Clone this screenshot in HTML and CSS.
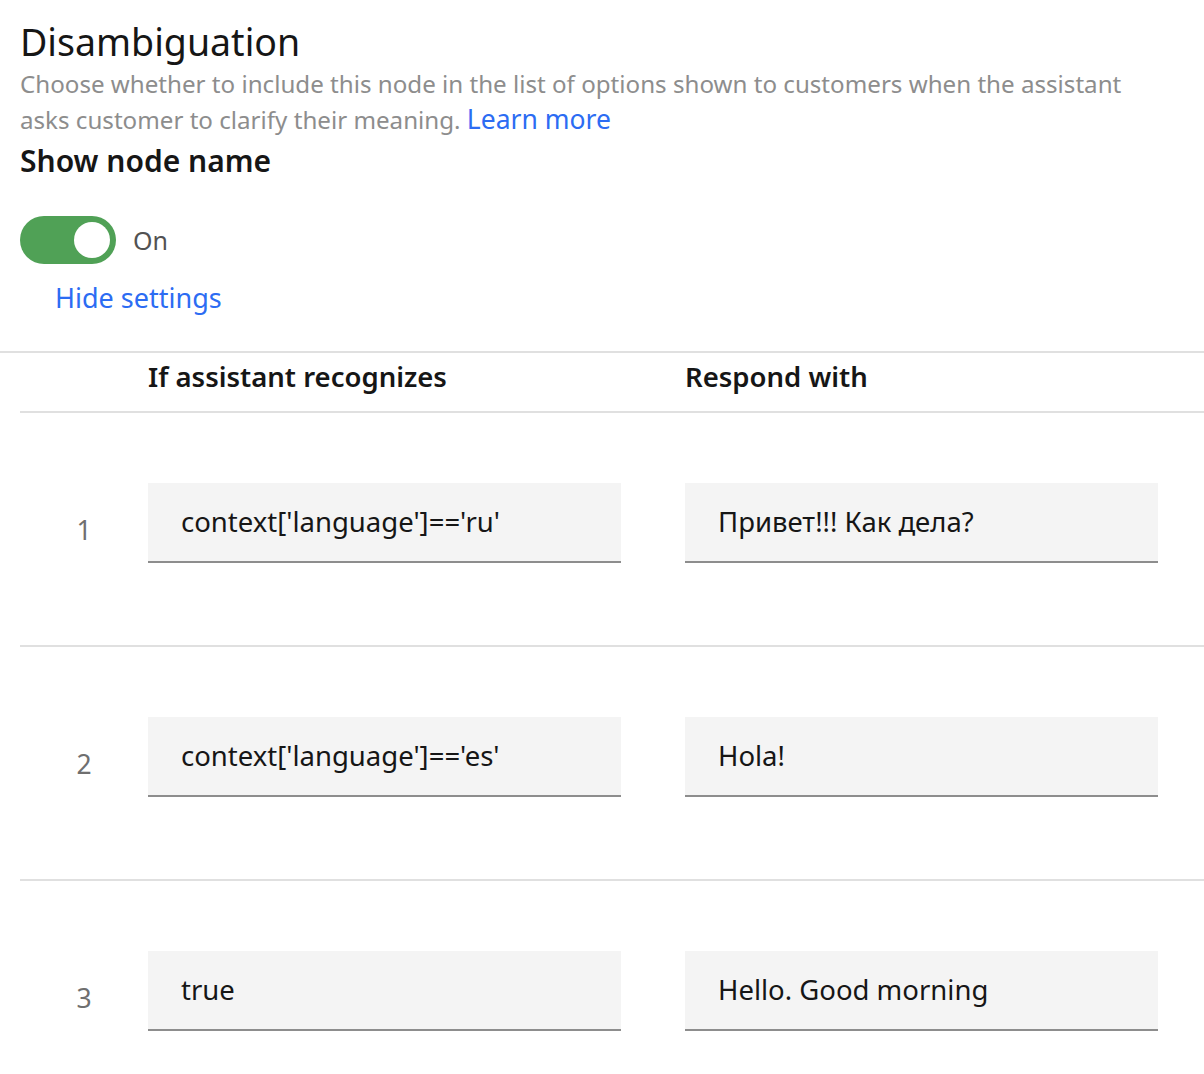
FILE: index.html
```html
<!DOCTYPE html>
<html lang="en">
<head>
<meta charset="utf-8">
<title>Disambiguation</title>
<link rel="stylesheet" href="styles.css">
</head>
<body>
<div class="panel">
  <section class="intro">
    <h1 class="title">Disambiguation</h1>
    <p class="desc">Choose whether to include this node in the list of options shown to customers when the assistant asks customer to clarify their meaning. <a class="link link-inline" href="#">Learn more</a></p>
    <h2 class="subtitle">Show node name</h2>
    <div class="toggle-row">
      <span class="toggle"><span class="knob"></span></span>
      <span class="toggle-label">On</span>
    </div>
    <a class="link hide-link" href="#">Hide settings</a>
  </section>

  <div class="divider"></div>

  <div class="table">
    <div class="thead">
      <span></span>
      <span class="th">If assistant recognizes</span>
      <span class="th col-resp">Respond with</span>
    </div>
    <div class="row">
      <span class="num">1</span>
      <div class="field">context['language']=='ru'</div>
      <div class="field col-resp">Привет!!! Как дела?</div>
    </div>
    <div class="row">
      <span class="num">2</span>
      <div class="field">context['language']=='es'</div>
      <div class="field col-resp">Hola!</div>
    </div>
    <div class="row">
      <span class="num">3</span>
      <div class="field">true</div>
      <div class="field col-resp">Hello. Good morning</div>
    </div>
  </div>
</div>
</body>
</html>
```
FILE: styles.css
```css
* { box-sizing: border-box; }
html, body { margin: 0; padding: 0; background: #ffffff; }
body {
  font-family: "Noto Sans", "Open Sans", "Liberation Sans", sans-serif;
  color: #161616;
  overflow: hidden;
}
.panel { width: 1204px; }

.intro { padding-left: 20px; padding-top: 17px; }

.title {
  margin: 0;
  font-size: 37.5px;
  font-weight: 400;
  line-height: 49px;
  color: #161616;
}
.desc {
  margin: 0;
  font-size: 24.15px;
  line-height: 36px;
  color: #8d8d8d;
  width: 1140px;
}
.link { color: #2c6cf3; text-decoration: none; }
.link-inline { font-size: 26.5px; line-height: 1; }

.subtitle {
  margin: 5px 0 0;
  font-size: 30px;
  font-weight: 600;
  line-height: 36px;
  color: #161616;
}

.toggle-row {
  margin-top: 37px;
  display: flex;
  align-items: center;
  height: 48px;
}
.toggle {
  width: 96px;
  height: 48px;
  border-radius: 24px;
  background: #50a156;
  display: flex;
  align-items: center;
  justify-content: flex-end;
  padding-right: 6px;
}
.knob {
  width: 36px;
  height: 36px;
  border-radius: 50%;
  background: #ffffff;
}
.toggle-label {
  margin-left: 17px;
  font-size: 25px;
  line-height: 48px;
  color: #525252;
}
.hide-link {
  display: inline-block;
  margin-top: 16px;
  margin-left: 35px;
  font-size: 27px;
  line-height: 36px;
}

.divider {
  margin-top: 35px;
  height: 2px;
  background: #e0e0e0;
}

.table { margin-left: 20px; }
.thead, .row {
  display: grid;
  grid-template-columns: 128px 473px 537px;
}
.col-resp { margin-left: 64px; }
.thead {
  padding-top: 6px;
  height: 60px;
  border-bottom: 2px solid #e0e0e0;
}
.th {
  font-size: 27.5px;
  font-weight: 600;
  line-height: 36px;
}
.row {
  height: 234px;
  border-bottom: 2px solid #e0e0e0;
}
.num {
  align-self: center;
  text-align: center;
  font-size: 26.5px;
  line-height: 36px;
  color: #6f6f6f;
  padding-top: 1px;
}
.field {
  align-self: start;
  margin-top: 70px;
  height: 80px;
  background: #f4f4f4;
  border-bottom: 2px solid #8d8d8d;
  padding-left: 33px;
  font-size: 27.5px;
  line-height: 78px;
  color: #161616;
  white-space: nowrap;
}
```
